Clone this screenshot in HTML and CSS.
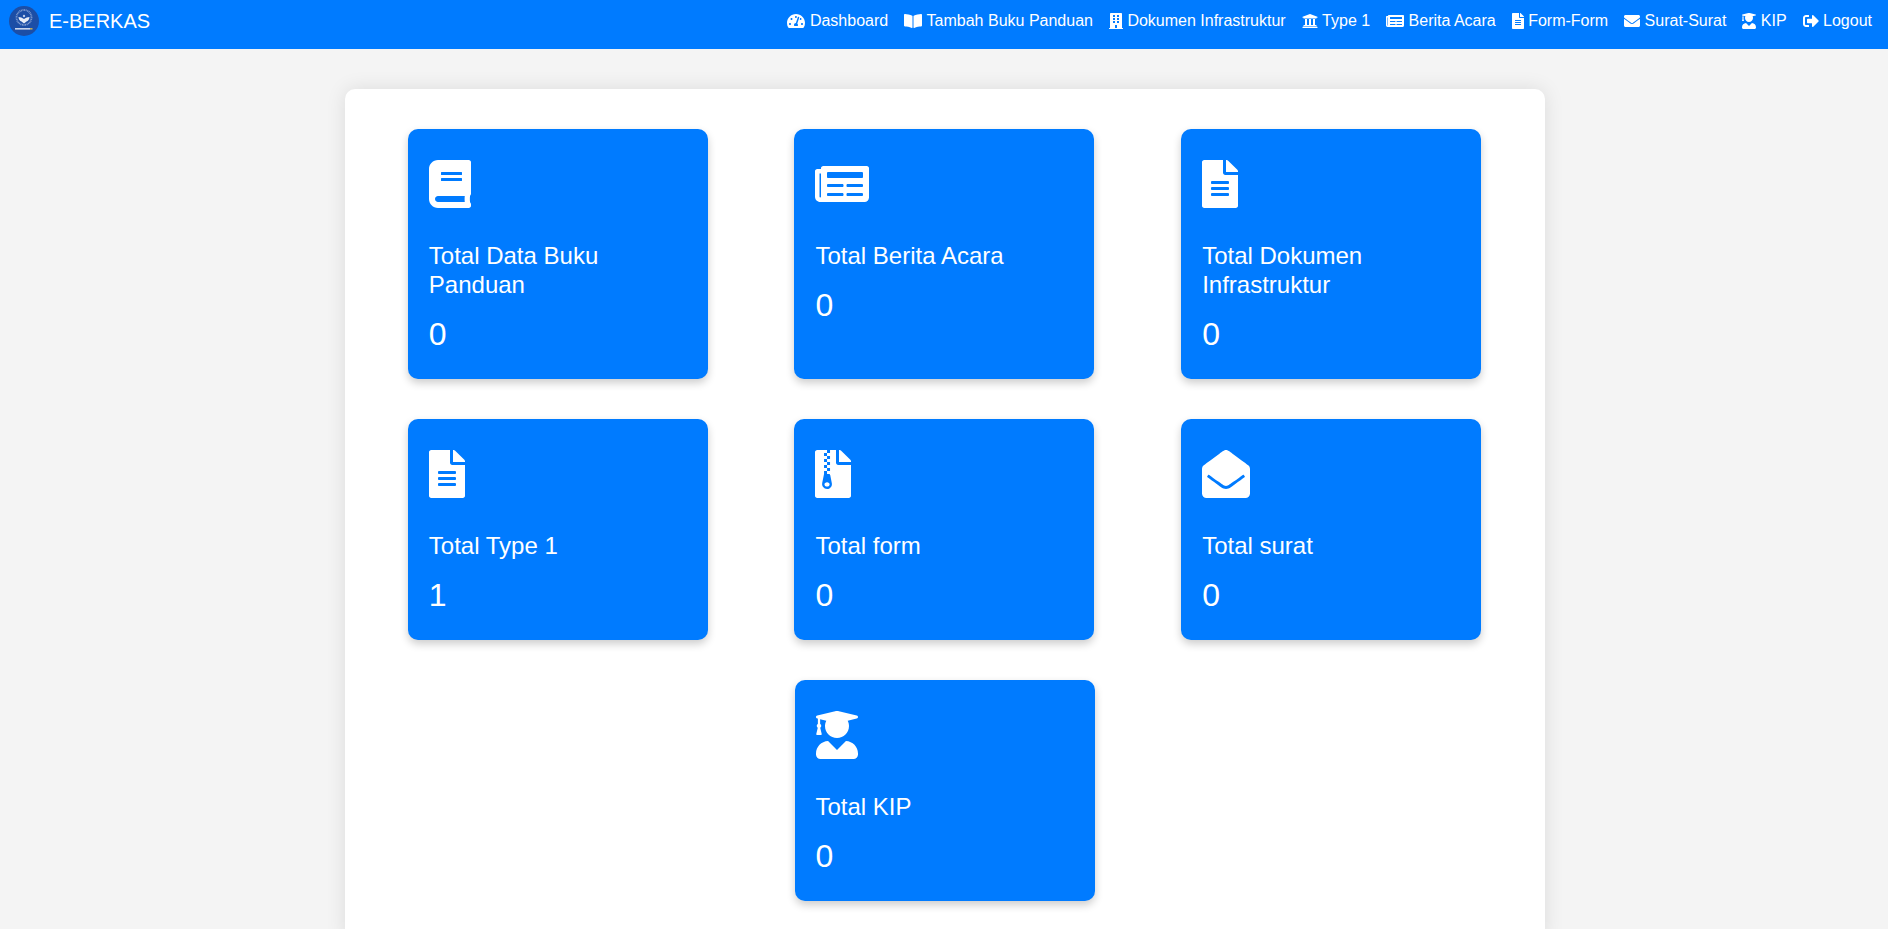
FILE: index.html
```html
<!DOCTYPE html>
<html lang="id">
<head>
<meta charset="utf-8">
<title>E-BERKAS</title>
<link rel="stylesheet" href="styles.css">
</head>
<body>
<svg class="sprite" aria-hidden="true">
<defs>
<symbol id="i-tach" viewBox="0 0 576 512"><path d="M288 32C128.94 32 0 160.94 0 320c0 52.8 14.25 102.26 39.06 144.8 5.61 9.62 16.3 15.2 27.44 15.2h443c11.14 0 21.83-5.58 27.44-15.2C561.75 422.26 576 372.8 576 320c0-159.06-128.94-288-288-288zm0 64c14.71 0 26.58 10.13 30.32 23.65-1.11 2.26-2.64 4.23-3.45 6.67l-9.22 27.67c-5.13 3.49-10.97 6.01-17.64 6.01-17.67 0-32-14.33-32-32S270.33 96 288 96zM96 384c-17.67 0-32-14.33-32-32s14.33-32 32-32 32 14.33 32 32-14.33 32-32 32zm48-160c-17.67 0-32-14.33-32-32s14.33-32 32-32 32 14.33 32 32-14.33 32-32 32zm246.77-72.41l-61.33 184C343.13 347.33 352 364.54 352 384c0 11.72-3.38 22.55-8.88 32H232.88c-5.5-9.45-8.88-20.28-8.88-32 0-33.94 26.5-61.43 59.9-63.59l61.34-184.01c4.17-12.56 17.73-19.45 30.36-15.17 12.57 4.19 19.35 17.79 15.17 30.36zm14.66 57.2l15.52-46.55c3.47-1.29 7.13-2.23 11.05-2.23 17.67 0 32 14.33 32 32s-14.33 32-32 32c-11.38-.01-20.89-6.28-26.57-15.22zM480 384c-17.67 0-32-14.33-32-32s14.33-32 32-32 32 14.33 32 32-14.33 32-32 32z"/></symbol>
<symbol id="i-bookopen" viewBox="0 0 576 512"><path d="M542.22 32.05c-54.8 3.11-163.72 14.43-230.96 55.59-4.64 2.84-7.27 7.89-7.27 13.17v363.87c0 11.55 12.63 18.85 23.28 13.49 69.18-34.82 169.23-44.32 218.7-46.92 16.89-.89 30.02-14.43 30.02-30.66V62.75c.01-17.71-15.35-31.74-33.77-30.7zM264.73 87.64C197.5 46.48 88.58 35.17 33.78 32.05 15.36 31.01 0 45.04 0 62.75V400.6c0 16.24 13.13 29.78 30.02 30.66 49.49 2.6 149.59 12.11 218.77 46.95 10.62 5.35 23.21-1.94 23.21-13.46V100.63c0-5.29-2.62-10.14-7.27-12.99z"/></symbol>
<symbol id="i-building" viewBox="0 0 448 512"><path d="M436 480h-20V24c0-13.255-10.745-24-24-24H56C42.745 0 32 10.745 32 24v456H12c-6.627 0-12 5.373-12 12v20h448v-20c0-6.627-5.373-12-12-12zM128 76c0-6.627 5.373-12 12-12h40c6.627 0 12 5.373 12 12v40c0 6.627-5.373 12-12 12h-40c-6.627 0-12-5.373-12-12V76zm0 96c0-6.627 5.373-12 12-12h40c6.627 0 12 5.373 12 12v40c0 6.627-5.373 12-12 12h-40c-6.627 0-12-5.373-12-12v-40zm52 148h-40c-6.627 0-12-5.373-12-12v-40c0-6.627 5.373-12 12-12h40c6.627 0 12 5.373 12 12v40c0 6.627-5.373 12-12 12zm76 160h-64v-84c0-6.627 5.373-12 12-12h40c6.627 0 12 5.373 12 12v84zm64-172c0 6.627-5.373 12-12 12h-40c-6.627 0-12-5.373-12-12v-40c0-6.627 5.373-12 12-12h40c6.627 0 12 5.373 12 12v40zm0-96c0 6.627-5.373 12-12 12h-40c-6.627 0-12-5.373-12-12v-40c0-6.627 5.373-12 12-12h40c6.627 0 12 5.373 12 12v40zm0-96c0 6.627-5.373 12-12 12h-40c-6.627 0-12-5.373-12-12V76c0-6.627 5.373-12 12-12h40c6.627 0 12 5.373 12 12v40z"/></symbol>
<symbol id="i-univ" viewBox="0 0 512 512"><path d="M496 128v16a8 8 0 0 1-8 8h-24v12c0 6.627-5.373 12-12 12H60c-6.627 0-12-5.373-12-12v-12H24a8 8 0 0 1-8-8v-16a8 8 0 0 1 4.941-7.392l232-88a7.996 7.996 0 0 1 6.118 0l232 88A8 8 0 0 1 496 128zm-24 304H40c-13.255 0-24 10.745-24 24v16a8 8 0 0 0 8 8h464a8 8 0 0 0 8-8v-16c0-13.255-10.745-24-24-24zM96 192v192H60c-6.627 0-12 5.373-12 12v20h416v-20c0-6.627-5.373-12-12-12h-36V192h-64v192h-64V192h-64v192h-64V192H96z"/></symbol>
<symbol id="i-news" viewBox="0 0 576 512"><path d="M552 64H88c-13.255 0-24 10.745-24 24v8H24c-13.255 0-24 10.745-24 24v272c0 30.928 25.072 56 56 56h472c26.51 0 48-21.49 48-48V88c0-13.255-10.745-24-24-24zM56 400a8 8 0 0 1-8-8V144h16v248a8 8 0 0 1-8 8zm236-16H140c-6.627 0-12-5.373-12-12v-8c0-6.627 5.373-12 12-12h152c6.627 0 12 5.373 12 12v8c0 6.627-5.373 12-12 12zm208 0H348c-6.627 0-12-5.373-12-12v-8c0-6.627 5.373-12 12-12h152c6.627 0 12 5.373 12 12v8c0 6.627-5.373 12-12 12zm-208-96H140c-6.627 0-12-5.373-12-12v-8c0-6.627 5.373-12 12-12h152c6.627 0 12 5.373 12 12v8c0 6.627-5.373 12-12 12zm208 0H348c-6.627 0-12-5.373-12-12v-8c0-6.627 5.373-12 12-12h152c6.627 0 12 5.373 12 12v8c0 6.627-5.373 12-12 12zm0-96H140c-6.627 0-12-5.373-12-12v-40c0-6.627 5.373-12 12-12h360c6.627 0 12 5.373 12 12v40c0 6.627-5.373 12-12 12z"/></symbol>
<symbol id="i-file" viewBox="0 0 384 512"><path d="M224 136V0H24C10.7 0 0 10.7 0 24v464c0 13.3 10.7 24 24 24h336c13.3 0 24-10.7 24-24V160H248c-13.2 0-24-10.8-24-24zm64 236c0 6.6-5.4 12-12 12H108c-6.6 0-12-5.4-12-12v-8c0-6.6 5.4-12 12-12h168c6.6 0 12 5.4 12 12v8zm0-64c0 6.6-5.4 12-12 12H108c-6.6 0-12-5.4-12-12v-8c0-6.6 5.4-12 12-12h168c6.6 0 12 5.4 12 12v8zm0-72v8c0 6.6-5.4 12-12 12H108c-6.6 0-12-5.4-12-12v-8c0-6.6 5.4-12 12-12h168c6.6 0 12 5.4 12 12zm96-114.1v6.1H256V0h6.1c6.4 0 12.5 2.5 17 7l97.9 98c4.5 4.5 7 10.6 7 16.9z"/></symbol>
<symbol id="i-zip" viewBox="0 0 384 512"><path d="M224 136V0h-63.6v32h-32V0H24C10.7 0 0 10.7 0 24v464c0 13.3 10.7 24 24 24h336c13.3 0 24-10.7 24-24V160H248c-13.2 0-24-10.8-24-24zM95.9 32h32v32h-32zm32.3 384c-33.2 0-58-30.4-51.4-62.9L96.4 256v-32h32v-32h-32v-32h32v-32h-32V96h32V64h32v32h-32v32h32v32h-32v32h32v32h-32v32h22.1c5.7 0 10.7 4.1 11.8 9.7l17.3 87.7c6.4 32.4-18.4 62.6-51.4 62.6zm.3-72c-15.3 0-27.6 10.4-27.6 23.1 0 12.9 12.4 23.1 27.6 23.1s27.6-10.4 27.6-23.1c0-12.7-12.4-23.1-27.6-23.1zM384 121.9v6.1H256V0h6.1c6.4 0 12.5 2.5 17 7l97.9 98c4.5 4.5 7 10.6 7 16.9z"/></symbol>
<symbol id="i-book" viewBox="0 0 448 512"><path d="M448 360V24c0-13.3-10.7-24-24-24H96C43 0 0 43 0 96v320c0 53 43 96 96 96h328c13.3 0 24-10.7 24-24v-16c0-7.5-3.5-14.3-8.9-18.7-4.2-15.4-4.2-59.3 0-74.7 5.4-4.3 8.9-11.1 8.9-18.6zM128 134c0-3.3 2.7-6 6-6h212c3.3 0 6 2.7 6 6v20c0 3.3-2.7 6-6 6H134c-3.3 0-6-2.7-6-6v-20zm0 64c0-3.3 2.7-6 6-6h212c3.3 0 6 2.7 6 6v20c0 3.3-2.7 6-6 6H134c-3.3 0-6-2.7-6-6v-20zm253.4 250H96c-17.7 0-32-14.3-32-32 0-17.6 14.4-32 32-32h285.4c-1.9 17.1-1.9 46.9 0 64z"/></symbol>
<symbol id="i-env" viewBox="0 0 512 512"><path d="M502.3 190.8c3.9-3.1 9.7-.2 9.7 4.7V400c0 26.5-21.5 48-48 48H48c-26.5 0-48-21.5-48-48V195.6c0-5 5.7-7.8 9.7-4.7 22.4 17.4 52.1 39.5 154.1 113.6 21.1 15.4 56.7 47.8 92.2 47.6 35.7.3 72-32.8 92.3-47.6 102-74.1 131.6-96.3 154-113.7zM256 320c23.2.4 56.6-29.2 73.4-41.4 132.7-96.3 142.8-104.7 173.4-128.7 5.8-4.5 9.2-11.5 9.2-18.9v-19c0-26.5-21.5-48-48-48H48C21.5 64 0 85.5 0 112v19c0 7.4 3.4 14.3 9.2 18.9 30.6 23.9 40.7 32.4 173.4 128.7 16.8 12.2 50.2 41.8 73.4 41.4z"/></symbol>
<symbol id="i-envopen" viewBox="0 0 512 512"><path d="M512 464c0 26.51-21.49 48-48 48H48c-26.51 0-48-21.49-48-48V200.724a48 48 0 0 1 18.387-37.776c24.913-19.529 45.501-35.365 164.2-121.511C199.412 29.17 232.797-.347 256 .003c23.198-.354 56.596 29.172 73.413 41.433 118.687 86.137 139.303 101.995 164.2 121.512A48 48 0 0 1 512 200.724V464zm-65.666-196.605c-2.563-3.728-7.7-4.595-11.339-1.907-22.845 16.873-55.462 40.705-105.582 77.079-16.825 12.266-50.21 41.781-73.413 41.43-23.211.344-56.559-29.143-73.413-41.43-50.114-36.37-82.734-60.204-105.582-77.079-3.639-2.688-8.776-1.821-11.339 1.907l-9.072 13.196a7.998 7.998 0 0 0 1.839 10.967c22.887 16.899 55.454 40.69 105.303 76.868 20.274 14.781 56.524 47.813 92.264 47.573 35.724.242 71.961-32.771 92.263-47.573 49.85-36.179 82.418-59.97 105.303-76.868a7.998 7.998 0 0 0 1.839-10.967l-9.071-13.196z"/></symbol>
<symbol id="i-grad" viewBox="0 0 448 512"><path d="M319.4 320.6L224 416l-95.4-95.4C57.1 323.7 0 382.2 0 454.4v9.6c0 26.5 21.5 48 48 48h352c26.5 0 48-21.5 48-48v-9.6c0-72.2-57.1-130.7-128.6-133.8zM13.6 79.8l6.4 1.5v58.4c-7 4.2-12 11.5-12 20.3 0 8.4 4.6 15.4 11.1 19.7L3.5 242c-1.7 6.9 2.1 14 7.6 14h41.8c5.5 0 9.3-7.1 7.6-14l-15.6-62.3C51.4 175.4 56 168.4 56 160c0-8.8-5-16.1-12-20.3V87.1l66 15.9c-8.6 17.2-14 36.4-14 57 0 70.7 57.3 128 128 128s128-57.3 128-128c0-20.6-5.3-39.8-14-57l96.3-23.2c18.2-4.4 18.2-27.1 0-31.5l-190.4-46c-13-3.1-26.7-3.1-39.7 0L13.6 48.2c-18.1 4.4-18.1 27.2 0 31.6z"/></symbol>
<symbol id="i-logout" viewBox="0 0 512 512"><path d="M497 273L329 441c-15 15-41 4.5-41-17v-96H152c-13.3 0-24-10.7-24-24v-96c0-13.3 10.7-24 24-24h136V88c0-21.4 25.9-32 41-17l168 168c9.3 9.4 9.3 24.6 0 34zM192 436v-40c0-6.6-5.4-12-12-12H96c-17.7 0-32-14.3-32-32V160c0-17.7 14.3-32 32-32h84c6.6 0 12-5.4 12-12V76c0-6.6-5.4-12-12-12H96c-53 0-96 43-96 96v192c0 53 43 96 96 96h84c6.6 0 12-5.4 12-12z"/></symbol>
</defs>
</svg>

<nav class="navbar">
  <a class="brand" href="#">
    <svg class="logo" viewBox="0 0 30 30" aria-hidden="true">
      <circle cx="15" cy="15" r="15" fill="#1c4ea6"/>
      <circle cx="15" cy="11.500" r="7.500" fill="none" stroke="#7f9bd0" stroke-width="1.800" stroke-dasharray="1 .6"/>
      <path d="M9.500 11c1.800.2 3.800.8 5.500 2 1.700-1.200 3.700-1.800 5.500-2-.3 2.500-1.300 4-3 4.500l-2.500 2-2.500-2c-1.700-.5-2.700-2-3-4.500z" fill="#e8edf7"/>
      <circle cx="15" cy="10" r="1.200" fill="#b9c9e8"/>
      <rect x="6" y="22" width="15" height="1.600" fill="#c8d4ec"/>
      <rect x="21" y="22" width="2.500" height="1.600" fill="#b5a65e"/>
    </svg>
    <span>E-BERKAS</span>
  </a>
  <ul class="nav-links">
    <li><a href="#"><svg class="nav-icon w18"><use href="#i-tach"/></svg>Dashboard</a></li>
    <li><a href="#"><svg class="nav-icon w18"><use href="#i-bookopen"/></svg>Tambah Buku Panduan</a></li>
    <li><a href="#"><svg class="nav-icon w14"><use href="#i-building"/></svg>Dokumen Infrastruktur</a></li>
    <li><a href="#"><svg class="nav-icon w16"><use href="#i-univ"/></svg>Type 1</a></li>
    <li><a href="#"><svg class="nav-icon w18"><use href="#i-news"/></svg>Berita Acara</a></li>
    <li><a href="#"><svg class="nav-icon w12"><use href="#i-file"/></svg>Form-Form</a></li>
    <li><a href="#"><svg class="nav-icon w16"><use href="#i-env"/></svg>Surat-Surat</a></li>
    <li><a href="#"><svg class="nav-icon w14"><use href="#i-grad"/></svg>KIP</a></li>
    <li><a href="#"><svg class="nav-icon w16"><use href="#i-logout"/></svg>Logout</a></li>
  </ul>
</nav>

<main class="panel">
  <section class="card">
    <svg class="card-icon w42"><use href="#i-book"/></svg>
    <h3 class="card-title">Total Data Buku Panduan</h3>
    <p class="card-value">0</p>
  </section>
  <section class="card">
    <svg class="card-icon w54"><use href="#i-news"/></svg>
    <h3 class="card-title">Total Berita Acara</h3>
    <p class="card-value">0</p>
  </section>
  <section class="card">
    <svg class="card-icon w36"><use href="#i-file"/></svg>
    <h3 class="card-title">Total Dokumen Infrastruktur</h3>
    <p class="card-value">0</p>
  </section>
  <section class="card">
    <svg class="card-icon w36"><use href="#i-file"/></svg>
    <h3 class="card-title">Total Type 1</h3>
    <p class="card-value">1</p>
  </section>
  <section class="card">
    <svg class="card-icon w36"><use href="#i-zip"/></svg>
    <h3 class="card-title">Total form</h3>
    <p class="card-value">0</p>
  </section>
  <section class="card">
    <svg class="card-icon w48"><use href="#i-envopen"/></svg>
    <h3 class="card-title">Total surat</h3>
    <p class="card-value">0</p>
  </section>
  <section class="card">
    <svg class="card-icon w42"><use href="#i-grad"/></svg>
    <h3 class="card-title">Total KIP</h3>
    <p class="card-value">0</p>
  </section>
</main>
</body>
</html>
```

FILE: styles.css
```css
* { box-sizing: border-box; }
html, body { margin: 0; padding: 0; }
body {
  padding-left: 1px;
  background: #f4f4f4;
  font-family: "Liberation Sans", Arial, sans-serif;
  color: #fff;
}
.sprite { display: none; }
.navbar {
  display: flex;
  justify-content: space-between;
  align-items: flex-start;
  height: 49px;
  margin-left: -1px;
  padding: 6px 16px 0 9px;
  background: #007bff;
}
.brand {
  display: flex;
  align-items: center;
  gap: 10px;
  color: #fff;
  text-decoration: none;
  font-size: 20px;
}
.logo { width: 30px; height: 30px; display: block; }
.nav-links {
  display: flex;
  gap: 16px;
  list-style: none;
  margin: 0;
  padding: 5px 0 0;
}
.nav-links a {
  display: flex;
  align-items: center;
  gap: 4.45px;
  height: 20px;
  color: #fff;
  text-decoration: none;
  font-size: 16px;
}
.nav-icon { display: block; height: 16px; fill: #fff; }
.w12 { width: 12px; }
.w14 { width: 14px; }
.w16 { width: 16px; }
.w18 { width: 18px; }
.panel {
  display: flex;
  flex-wrap: wrap;
  justify-content: space-around;
  width: 1200px;
  margin: 40px auto 0;
  padding: 20px;
  background: #fff;
  border-radius: 10px;
  box-shadow: 0 0 20px rgba(0, 0, 0, 0.1);
}
.card {
  width: 300px;
  margin: 20px;
  padding: 31px 21px 26px;
  background: #007bff;
  border-radius: 10px;
  box-shadow: 0 4px 8px rgba(0, 0, 0, 0.2);
}
.card-icon { display: block; height: 48px; fill: #fff; }
.w36 { width: 36px; }
.w42 { width: 42px; }
.w48 { width: 48px; }
.w54 { width: 54px; }
.card-title {
  margin: 34px 0 15px;
  font-size: 24px;
  font-weight: 400;
  line-height: 28.8px;
}
.card-value {
  margin: 0;
  font-size: 32px;
  line-height: 38.4px;
}
```
